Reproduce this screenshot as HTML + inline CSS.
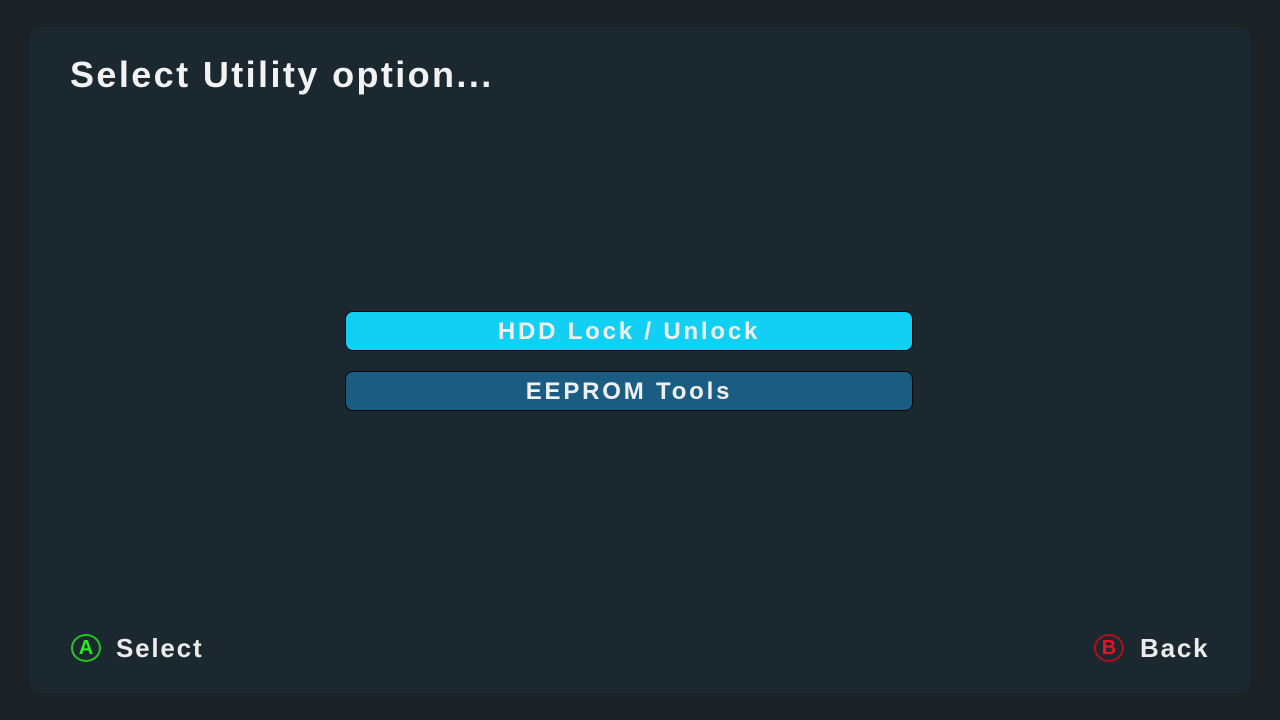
<!DOCTYPE html>
<html><head><style>
html,body{margin:0;padding:0;width:1280px;height:720px;background:#1a2226;overflow:hidden;font-family:"Liberation Sans",sans-serif;}
.panel{position:absolute;left:30px;top:27px;width:1220px;height:666px;background:#1c2830;border-radius:12px;}
.title{position:absolute;left:70px;top:54px;font-size:36px;font-weight:bold;color:#f2f2f2;letter-spacing:2.4px;}
.btn{position:absolute;left:345px;width:566px;height:38px;border:1px solid #05090c;border-radius:8px;color:#f0f0f0;font-weight:bold;font-size:24px;text-align:center;line-height:39px;letter-spacing:2.8px;}
.b1{top:311px;background:#12d0f4;}
.b2{top:371px;background:#1a5c82;}
.foot{position:absolute;top:632px;font-size:26px;font-weight:bold;color:#ececec;letter-spacing:1.8px;line-height:32px;}
.circ{position:absolute;top:634px;width:30px;height:28px;border-radius:50%;box-sizing:border-box;font-weight:bold;font-size:20px;text-align:center;line-height:24px;}
</style></head><body>
<div class="panel"></div>
<div class="title">Select Utility option...</div>
<div class="btn b1">HDD Lock / Unlock</div>
<div class="btn b2">EEPROM Tools</div>
<div class="circ" style="left:71px;border:2px solid #22c81e;color:#28ee22;">A</div>
<div class="foot" style="left:116px;">Select</div>
<div class="circ" style="left:1094px;border:2px solid #b0101a;color:#f01020;">B</div>
<div class="foot" style="left:1140px;">Back</div>
</body></html>
